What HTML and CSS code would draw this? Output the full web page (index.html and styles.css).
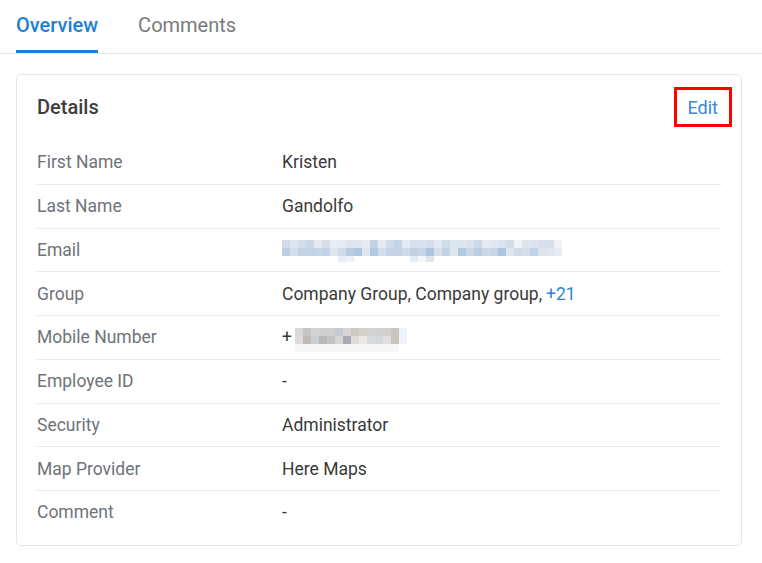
FILE: index.html
```html
<!DOCTYPE html>
<html>
<head>
<meta charset="utf-8">
<link rel="stylesheet" href="styles.css">
</head>
<body>
<nav class="tabs">
  <div class="tab active">Overview</div>
  <div class="tab">Comments</div>
</nav>
<main class="content">
  <section class="card">
    <header class="card-head">
      <h2 class="title">Details</h2>
      <button class="edit">Edit</button>
    </header>
    <div class="rows">
      <div class="row"><div class="label">First Name</div><div class="value">Kristen</div></div>
      <div class="row"><div class="label">Last Name</div><div class="value">Gandolfo</div></div>
      <div class="row"><div class="label">Email</div><div class="value">
        <svg class="blur-email" width="280" height="22" viewBox="0 0 280 22">
          <g>
            <rect x="0" y="0" width="8" height="8" fill="#d0dcea"/><rect x="8" y="0" width="8" height="8" fill="#dde6f0"/><rect x="16" y="0" width="8" height="8" fill="#d4dde9"/><rect x="24" y="0" width="8" height="8" fill="#cad7e7"/><rect x="32" y="0" width="8" height="8" fill="#e3eaf3"/><rect x="40" y="0" width="8" height="8" fill="#d5dfeb"/><rect x="48" y="0" width="8" height="8" fill="#e8edf5"/><rect x="56" y="0" width="8" height="8" fill="#e6ecf4"/><rect x="64" y="0" width="8" height="8" fill="#dde5ef"/><rect x="72" y="0" width="8" height="8" fill="#dfe6ef"/><rect x="80" y="0" width="8" height="8" fill="#e6ebf2"/><rect x="88" y="0" width="8" height="8" fill="#c3d3e6"/><rect x="96" y="0" width="8" height="8" fill="#e3eaf3"/><rect x="104" y="0" width="8" height="8" fill="#cfdbea"/><rect x="112" y="0" width="8" height="8" fill="#c4d4e6"/><rect x="120" y="0" width="8" height="8" fill="#e3eaf3"/><rect x="128" y="0" width="8" height="8" fill="#d7e0ec"/><rect x="136" y="0" width="8" height="8" fill="#d9e1ed"/><rect x="144" y="0" width="8" height="8" fill="#d5dfeb"/><rect x="152" y="0" width="8" height="8" fill="#e1e8f1"/><rect x="160" y="0" width="8" height="8" fill="#cfdcea"/><rect x="168" y="0" width="8" height="8" fill="#dde5ef"/><rect x="176" y="0" width="8" height="8" fill="#dde5ef"/><rect x="184" y="0" width="8" height="8" fill="#d9e2ed"/><rect x="192" y="0" width="8" height="8" fill="#cbd9e9"/><rect x="200" y="0" width="8" height="8" fill="#e3eaf3"/><rect x="208" y="0" width="8" height="8" fill="#e1e8f1"/><rect x="216" y="0" width="8" height="8" fill="#dae3ee"/><rect x="224" y="0" width="8" height="8" fill="#d3dde9"/><rect x="232" y="0" width="8" height="8" fill="#f0f3f8"/><rect x="240" y="0" width="8" height="8" fill="#dee5ef"/><rect x="248" y="0" width="8" height="8" fill="#dbe3ee"/><rect x="256" y="0" width="8" height="8" fill="#d6dfeb"/><rect x="264" y="0" width="8" height="8" fill="#d5dfeb"/><rect x="272" y="0" width="8" height="8" fill="#eff3f8"/>
            <rect x="0" y="8" width="8" height="8" fill="#bccfe3"/><rect x="8" y="8" width="8" height="8" fill="#d4dfeb"/><rect x="16" y="8" width="8" height="8" fill="#c3d3e4"/><rect x="24" y="8" width="8" height="8" fill="#c3d3e4"/><rect x="32" y="8" width="8" height="8" fill="#c6d5e6"/><rect x="40" y="8" width="8" height="8" fill="#c0d2e5"/><rect x="48" y="8" width="8" height="8" fill="#dde5ef"/><rect x="56" y="8" width="8" height="8" fill="#d0dbe8"/><rect x="64" y="8" width="8" height="8" fill="#b7cbe1"/><rect x="72" y="8" width="8" height="8" fill="#adc5df"/><rect x="80" y="8" width="8" height="8" fill="#dde5ef"/><rect x="88" y="8" width="8" height="8" fill="#b1c8e1"/><rect x="96" y="8" width="8" height="8" fill="#d3deea"/><rect x="104" y="8" width="8" height="8" fill="#c4d3e5"/><rect x="112" y="8" width="8" height="8" fill="#c4d3e5"/><rect x="120" y="8" width="8" height="8" fill="#d0dbe8"/><rect x="128" y="8" width="8" height="8" fill="#c3cfe3"/><rect x="136" y="8" width="8" height="8" fill="#c9d5e6"/><rect x="144" y="8" width="8" height="8" fill="#afc6df"/><rect x="152" y="8" width="8" height="8" fill="#d5dfeb"/><rect x="160" y="8" width="8" height="8" fill="#c1d2e5"/><rect x="168" y="8" width="8" height="8" fill="#dde5ef"/><rect x="176" y="8" width="8" height="8" fill="#b0c8e1"/><rect x="184" y="8" width="8" height="8" fill="#c8d6e8"/><rect x="192" y="8" width="8" height="8" fill="#bacde3"/><rect x="200" y="8" width="8" height="8" fill="#ccd8e8"/><rect x="208" y="8" width="8" height="8" fill="#c8d5e6"/><rect x="216" y="8" width="8" height="8" fill="#b0c6df"/><rect x="224" y="8" width="8" height="8" fill="#dfe6ef"/><rect x="232" y="8" width="8" height="8" fill="#d1dcea"/><rect x="240" y="8" width="8" height="8" fill="#d5dfec"/><rect x="248" y="8" width="8" height="8" fill="#c3d3e6"/><rect x="256" y="8" width="8" height="8" fill="#dce4ee"/><rect x="264" y="8" width="8" height="8" fill="#dfe6ef"/><rect x="272" y="8" width="8" height="8" fill="#e6ecf4"/>
            <rect x="56" y="16" width="8" height="6" fill="#e7edf5"/><rect x="64" y="16" width="8" height="6" fill="#edf2f8"/><rect x="128" y="16" width="8" height="6" fill="#e6ecf4"/><rect x="136" y="16" width="8" height="6" fill="#f4f6fa"/><rect x="144" y="16" width="8" height="6" fill="#dfe6ef"/>
          </g>
        </svg>
      </div></div>
      <div class="row"><div class="label">Group</div><div class="value">Company Group, Company group, <a class="more">+21</a></div></div>
      <div class="row"><div class="label">Mobile Number</div><div class="value phone">+<svg class="blur-phone" width="112" height="24" viewBox="0 0 112 24">
          <rect x="0" y="0" width="8" height="8" fill="#d9d9d9"/><rect x="8" y="0" width="8" height="8" fill="#c8c6c4"/><rect x="16" y="0" width="8" height="8" fill="#d2d2d4"/><rect x="24" y="0" width="8" height="8" fill="#d0cfcf"/><rect x="32" y="0" width="8" height="8" fill="#cfcfcf"/><rect x="40" y="0" width="8" height="8" fill="#c6c9cd"/><rect x="48" y="0" width="8" height="8" fill="#d6d6d6"/><rect x="56" y="0" width="8" height="8" fill="#cfc9c4"/><rect x="64" y="0" width="8" height="8" fill="#d4d0cc"/><rect x="72" y="0" width="8" height="8" fill="#d2d2d4"/><rect x="80" y="0" width="8" height="8" fill="#cfd0d2"/><rect x="88" y="0" width="8" height="8" fill="#d2cfcc"/><rect x="96" y="0" width="8" height="8" fill="#c9c5c2"/><rect x="104" y="0" width="8" height="8" fill="#eef3f8"/>
          <rect x="0" y="8" width="8" height="8" fill="#dcdcdc"/><rect x="8" y="8" width="8" height="8" fill="#c0bbb8"/><rect x="16" y="8" width="8" height="8" fill="#cbcfd3"/><rect x="24" y="8" width="8" height="8" fill="#b8b8b8"/><rect x="32" y="8" width="8" height="8" fill="#c4c4c4"/><rect x="40" y="8" width="8" height="8" fill="#d5d5d5"/><rect x="48" y="8" width="8" height="8" fill="#a9abb3"/><rect x="56" y="8" width="8" height="8" fill="#e0dcd8"/><rect x="64" y="8" width="8" height="8" fill="#ebe8e4"/><rect x="72" y="8" width="8" height="8" fill="#d8dce2"/><rect x="80" y="8" width="8" height="8" fill="#d6d8dc"/><rect x="88" y="8" width="8" height="8" fill="#e0e0e0"/><rect x="96" y="8" width="8" height="8" fill="#c9c4be"/><rect x="104" y="8" width="8" height="8" fill="#f0f4f8"/>
          <rect x="0" y="16" width="104" height="8" fill="#f7f7f7"/>
        </svg></div></div>
      <div class="row"><div class="label">Employee ID</div><div class="value">-</div></div>
      <div class="row"><div class="label">Security</div><div class="value">Administrator</div></div>
      <div class="row"><div class="label">Map Provider</div><div class="value">Here Maps</div></div>
      <div class="row"><div class="label">Comment</div><div class="value">-</div></div>
    </div>
  </section>
</main>
</body>
</html>
```
FILE: styles.css
```css
* { box-sizing: border-box; }
html, body { margin: 0; padding: 0; background: #fff; }
body {
  font-family: Roboto, "Liberation Sans", sans-serif;
  color: #3a3a3a;
}
.tabs {
  display: flex;
  gap: 40px;
  padding: 0 16px;
  border-bottom: 1px solid #e6e6e6;
}
.tab {
  font-size: 20px;
  line-height: 26px;
  padding: 12px 0 12px;
  border-bottom: 3px solid transparent;
  color: #7a7a7a;
}
.tab.active {
  color: #1f7fd6;
  font-weight: 500;
  border-bottom-color: #1f7fd6;
}
.content {
  padding: 20px 20px 0 16px;
}
.card {
  border: 1px solid #e6e6e6;
  border-radius: 5px;
  padding: 12px 20px 11px;
}
.card-head {
  display: flex;
  justify-content: space-between;
  align-items: center;
  height: 40px;
  margin-right: -11px;
}
.title {
  margin: 0;
  font-size: 20px;
  font-weight: 500;
  color: #3d3d3d;
}
.edit {
  font-family: inherit;
  font-size: 18px;
  color: #3b86d8;
  background: #fff;
  border: 3px solid #ff0000;
  height: 40px;
  padding: 0 11px;
  cursor: pointer;
}
.rows {
  margin-top: 13px;
}
.row {
  display: flex;
  align-items: center;
  height: 43.75px;
  font-size: 17.5px;
  border-top: 1px solid #e8e8e8;
}
.row:first-child { border-top: none; }
.label {
  width: 245px;
  color: #6f7379;
}
.value {
  color: #3a3a3a;
  display: flex;
  align-items: center;
}
.more { color: #2c83d9; margin-left: 4px; }
.blur-email { display: block; margin-top: 2px; }
.blur-phone { display: block; margin-left: 3px; margin-top: 6px; }
```
